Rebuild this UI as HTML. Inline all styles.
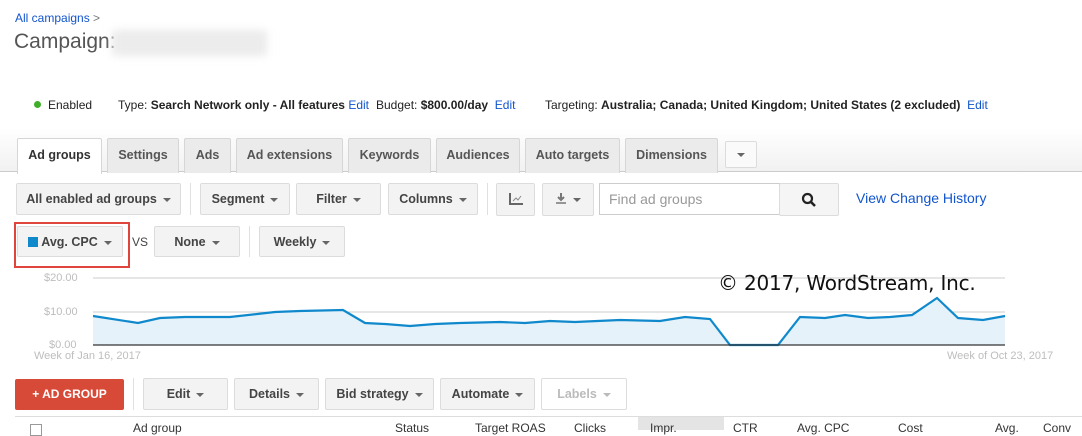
<!DOCTYPE html>
<html><head><style>
*{box-sizing:border-box;margin:0;padding:0}
body{width:1082px;height:430px;overflow:hidden;background:#fff;font-family:"Liberation Sans",Arial,sans-serif;color:#333;position:relative}
.a{position:absolute;white-space:nowrap}
.blue{color:#1155cc}
.tab{position:absolute;top:138px;height:35px;border:1px solid #d6d6d6;border-bottom:none;background:#ebebeb;font-size:12.5px;font-weight:bold;color:#555;text-align:center;line-height:33px;border-radius:2px 2px 0 0}
.btn{position:absolute;height:32px;border:1px solid #dcdcdc;border-radius:2px;background:#f3f3f3;font-size:12.5px;font-weight:bold;color:#444;text-align:center;line-height:30px}
.car{display:inline-block;width:0;height:0;border-left:4px solid transparent;border-right:4px solid transparent;border-top:4px solid #666;vertical-align:middle;margin-left:6px}
.sep{position:absolute;width:1px;background:#e0e0e0}
.ax{position:absolute;font-size:11px;color:#bdbdbd}
</style></head><body>
<div class="a blue" style="left:15px;top:11px;font-size:12px">All campaigns <span style="color:#777">&gt;</span></div>
<div class="a" style="left:14px;top:30px;font-size:21px;color:#555">Campaign:</div>
<div class="a" style="left:112px;top:30px;width:155px;height:26px;background:#ececec;filter:blur(4px)"></div>
<div class="a" style="left:34px;top:101px;width:7px;height:7px;border-radius:50%;background:#3fae29"></div>
<div class="a" style="left:48px;top:98px;font-size:12px;color:#222">Enabled</div>
<div class="a" style="left:118px;top:98px;font-size:12px;color:#222">Type: <b>Search Network only - All features</b> <span class="blue">Edit</span></div>
<div class="a" style="left:376px;top:98px;font-size:12px;color:#222">Budget: <b>$800.00/day</b> <span class="blue">&nbsp;Edit</span></div>
<div class="a" style="left:545px;top:98px;font-size:12px;color:#222">Targeting: <b>Australia; Canada; United Kingdom; United States (2 excluded)</b> <span class="blue">&nbsp;Edit</span></div>
<div class="a" style="left:0;top:128px;width:1082px;height:44px;background:linear-gradient(#fff,#f1f1f1)"></div>
<div class="a" style="left:0;top:171px;width:1082px;height:1px;background:#ccc"></div>
<div class="tab" style="left:17px;width:85px;background:#fff;height:36px;color:#333">Ad groups</div>
<div class="tab" style="left:107px;width:72px">Settings</div>
<div class="tab" style="left:184px;width:47px">Ads</div>
<div class="tab" style="left:236px;width:107px">Ad extensions</div>
<div class="tab" style="left:348px;width:83px">Keywords</div>
<div class="tab" style="left:436px;width:84px">Audiences</div>
<div class="tab" style="left:525px;width:95px">Auto targets</div>
<div class="tab" style="left:625px;width:93px">Dimensions</div>
<div class="btn" style="left:725px;top:141px;width:32px;height:27px;background:#fafafa;line-height:24px"><span class="car" style="margin:0"></span></div>

<div class="btn" style="left:16px;top:183px;width:165px">All enabled ad groups<span class="car"></span></div>
<div class="sep" style="left:190px;top:183px;height:32px"></div>
<div class="btn" style="left:200px;top:183px;width:90px">Segment<span class="car"></span></div>
<div class="btn" style="left:296px;top:183px;width:85px">Filter<span class="car"></span></div>
<div class="btn" style="left:388px;top:183px;width:90px">Columns<span class="car"></span></div>
<div class="sep" style="left:487px;top:183px;height:32px"></div>
<div class="btn" style="left:496px;top:183px;width:39px;height:33px"><svg width="16" height="14" viewBox="0 0 16 14" style="margin-top:8px"><path d="M2 1V12H15" stroke="#666" stroke-width="2" fill="none"/><path d="M5 9L8 6L10 8L13 4" stroke="#888" stroke-width="1" fill="none"/></svg></div>
<div class="btn" style="left:542px;top:183px;width:52px;height:33px"><svg width="12" height="12" viewBox="0 0 12 12" style="vertical-align:-1px"><path d="M6 1V8M3 5L6 8L9 5" stroke="#777" stroke-width="2" fill="none"/><path d="M1 11H11" stroke="#777" stroke-width="1.5"/></svg><span class="car"></span></div>
<div class="a" style="left:599px;top:183px;width:181px;height:32px;border:1px solid #ccc;font-size:14px;color:#999;line-height:30px;padding-left:9px">Find ad groups</div>
<div class="btn" style="left:779px;top:183px;width:60px;height:33px;background:#f5f5f5"><svg width="16" height="16" viewBox="0 0 16 16" style="margin-top:8px"><circle cx="6.5" cy="6.5" r="4.5" stroke="#222" stroke-width="2.2" fill="none"/><path d="M10 10L14 14" stroke="#222" stroke-width="2.6"/></svg></div>
<div class="a blue" style="left:856px;top:190px;font-size:14px">View Change History</div>

<div class="a" style="left:14px;top:222px;width:116px;height:46px;border:2px solid #e0453c"></div>
<div class="btn" style="left:17px;top:226px;width:106px;height:31px;background:#f3f3f3">
<span style="display:inline-block;width:10px;height:10px;background:#0f89cc;vertical-align:-1px;margin-right:3px"></span>Avg. CPC<span class="car"></span></div>
<div class="a" style="left:132px;top:235px;font-size:12px;color:#444">VS</div>
<div class="btn" style="left:154px;top:226px;width:86px;height:31px">None<span class="car"></span></div>
<div class="sep" style="left:249px;top:226px;height:31px"></div>
<div class="btn" style="left:259px;top:226px;width:86px;height:31px">Weekly<span class="car"></span></div>

<svg class="a" style="left:0;top:270px" width="1082" height="95">
<line x1="93" y1="8" x2="1005" y2="8" stroke="#ccc"/>
<line x1="93" y1="42" x2="1005" y2="42" stroke="#ccc"/>
<polygon fill="#e6f2f9" points="93,46 138,53 160,48 185,47 230,47 275,42 300,41 343,40 365,53 385,54 410,56 435,54 460,53 500,52 525,53 550,51 575,52 620,50 660,51 685,47 710,49 730,75 778,75 800,47 825,48 845,45 868,48 890,47 912,45 937,28 958,48 983,50 1005,46 1005,75 93,75"/>
<polyline fill="none" stroke="#0f89cc" stroke-width="2.2" points="93,46 138,53 160,48 185,47 230,47 275,42 300,41 343,40 365,53 385,54 410,56 435,54 460,53 500,52 525,53 550,51 575,52 620,50 660,51 685,47 710,49 730,75 778,75 800,47 825,48 845,45 868,48 890,47 912,45 937,28 958,48 983,50 1005,46"/>
<line x1="93" y1="75" x2="1005" y2="75" stroke="#333" stroke-width="1.2"/>
</svg>
<div class="ax" style="left:44px;top:272px">$20.00</div>
<div class="ax" style="left:44px;top:306px">$10.00</div>
<div class="ax" style="left:49px;top:339px">$0.00</div>
<div class="ax" style="left:34px;top:350px">Week of Jan 16, 2017</div>
<div class="ax" style="left:947px;top:350px">Week of Oct 23, 2017</div>
<div class="a" style="left:718px;top:271px;font-size:20px;color:#111;font-family:'DejaVu Sans',sans-serif;letter-spacing:-0.2px">© 2017, WordStream, Inc.</div>

<div class="a" style="left:15px;top:379px;width:109px;height:31px;background:#d84a38;border-radius:2px;color:#fff;font-size:12px;font-weight:bold;line-height:31px;text-align:center">+ AD GROUP</div>
<div class="sep" style="left:133px;top:378px;height:32px"></div>
<div class="btn" style="left:143px;top:378px;width:85px">Edit<span class="car"></span></div>
<div class="btn" style="left:234px;top:378px;width:85px">Details<span class="car"></span></div>
<div class="btn" style="left:325px;top:378px;width:109px">Bid strategy<span class="car"></span></div>
<div class="btn" style="left:440px;top:378px;width:95px">Automate<span class="car"></span></div>
<div class="btn" style="left:541px;top:378px;width:86px;background:#fff;color:#bbb">Labels<span class="car" style="border-top-color:#bbb"></span></div>
<div class="a" style="left:15px;top:416px;width:1067px;height:14px;border-top:1px solid #ddd;background:#fff"></div>
<div class="a" style="left:638px;top:417px;width:86px;height:13px;background:#e4e4e4"></div>
<div class="a" style="left:30px;top:424px;width:12px;height:12px;border:1px solid #999"></div>
<div class="a" style="left:133px;top:421px;font-size:12px;color:#333">Ad group</div>
<div class="a" style="left:395px;top:421px;font-size:12px;color:#333">Status</div>
<div class="a" style="left:475px;top:421px;font-size:12px;color:#333">Target ROAS</div>
<div class="a" style="left:574px;top:421px;font-size:12px;color:#333">Clicks</div>
<div class="a" style="left:650px;top:421px;font-size:12px;color:#333">Impr.</div>
<div class="a" style="left:733px;top:421px;font-size:12px;color:#333">CTR</div>
<div class="a" style="left:797px;top:421px;font-size:12px;color:#333">Avg. CPC</div>
<div class="a" style="left:898px;top:421px;font-size:12px;color:#333">Cost</div>
<div class="a" style="left:995px;top:421px;font-size:12px;color:#333">Avg.</div>
<div class="a" style="left:1043px;top:421px;font-size:12px;color:#333">Conv</div>
</body></html>
